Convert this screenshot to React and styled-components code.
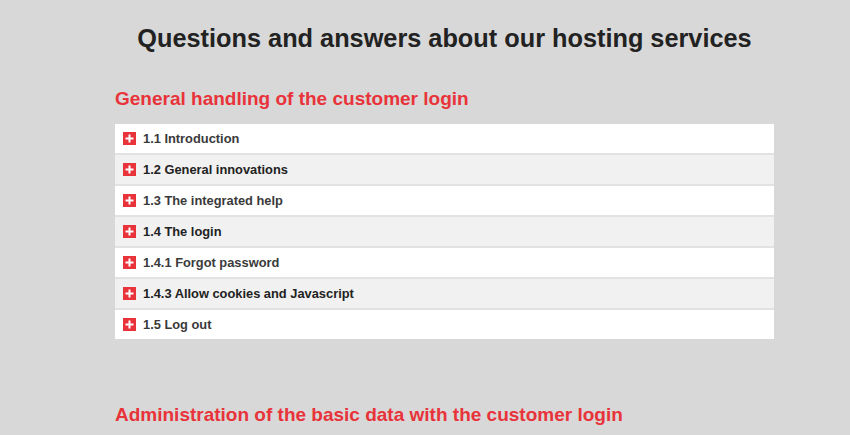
import React from "react";
import styled, { createGlobalStyle } from "styled-components";

const GlobalStyle = createGlobalStyle`
  html, body {
    margin: 0;
    padding: 0;
    background: #d8d8d8;
    font-family: "Liberation Sans", Arial, sans-serif;
  }
`;

const Page = styled.div`
  width: 850px;
  height: 435px;
  overflow: hidden;
  padding: 0 76px 0 115px;
  box-sizing: border-box;
`;

const Title = styled.h1`
  margin: 21px 0 0 0;
  font-size: 25.3px;
  font-weight: 700;
  color: #222222;
  text-align: center;
  line-height: 34px;
`;

const SectionTitle = styled.h2`
  margin: ${(p) => p.$top}px 0 0 0;
  font-size: 19px;
  font-weight: 700;
  color: #e8333a;
  line-height: 24px;
`;

const List = styled.ul`
  list-style: none;
  margin: 13px 0 0 0;
  padding: 0;
  background: #ffffff;
`;

const Row = styled.li`
  display: flex;
  align-items: center;
  gap: 7px;
  height: 29px;
  padding-left: 8px;
  background: ${(p) => (p.$alt ? "#f1f1f1" : "#ffffff")};
  border-bottom: 2px solid #e2e2e2;
  font-size: 12.85px;
  font-weight: 700;
  color: ${(p) => (p.$alt ? "#222222" : "#3a3a3a")};
  cursor: pointer;

  &:last-child {
    border-bottom: none;
  }
`;

const PlusIcon = () => (
  <svg width="13" height="13" viewBox="0 0 13 13">
    <rect width="13" height="13" fill="#e8333a" />
    <rect x="2.5" y="5.5" width="8" height="2" fill="#ffffff" />
    <rect x="5.5" y="2.5" width="2" height="8" fill="#ffffff" />
  </svg>
);

const items = [
  "1.1 Introduction",
  "1.2 General innovations",
  "1.3 The integrated help",
  "1.4 The login",
  "1.4.1 Forgot password",
  "1.4.3 Allow cookies and Javascript",
  "1.5 Log out",
];

export default function App() {
  return (
    <>
      <GlobalStyle />
      <Page>
        <Title>Questions and answers about our hosting services</Title>
        <SectionTitle $top={32}>General handling of the customer login</SectionTitle>
        <List>
          {items.map((item, i) => (
            <Row key={item} $alt={i % 2 === 1}>
              <PlusIcon />
              {item}
            </Row>
          ))}
        </List>
        <SectionTitle $top={64}>Administration of the basic data with the customer login</SectionTitle>
      </Page>
    </>
  );
}
